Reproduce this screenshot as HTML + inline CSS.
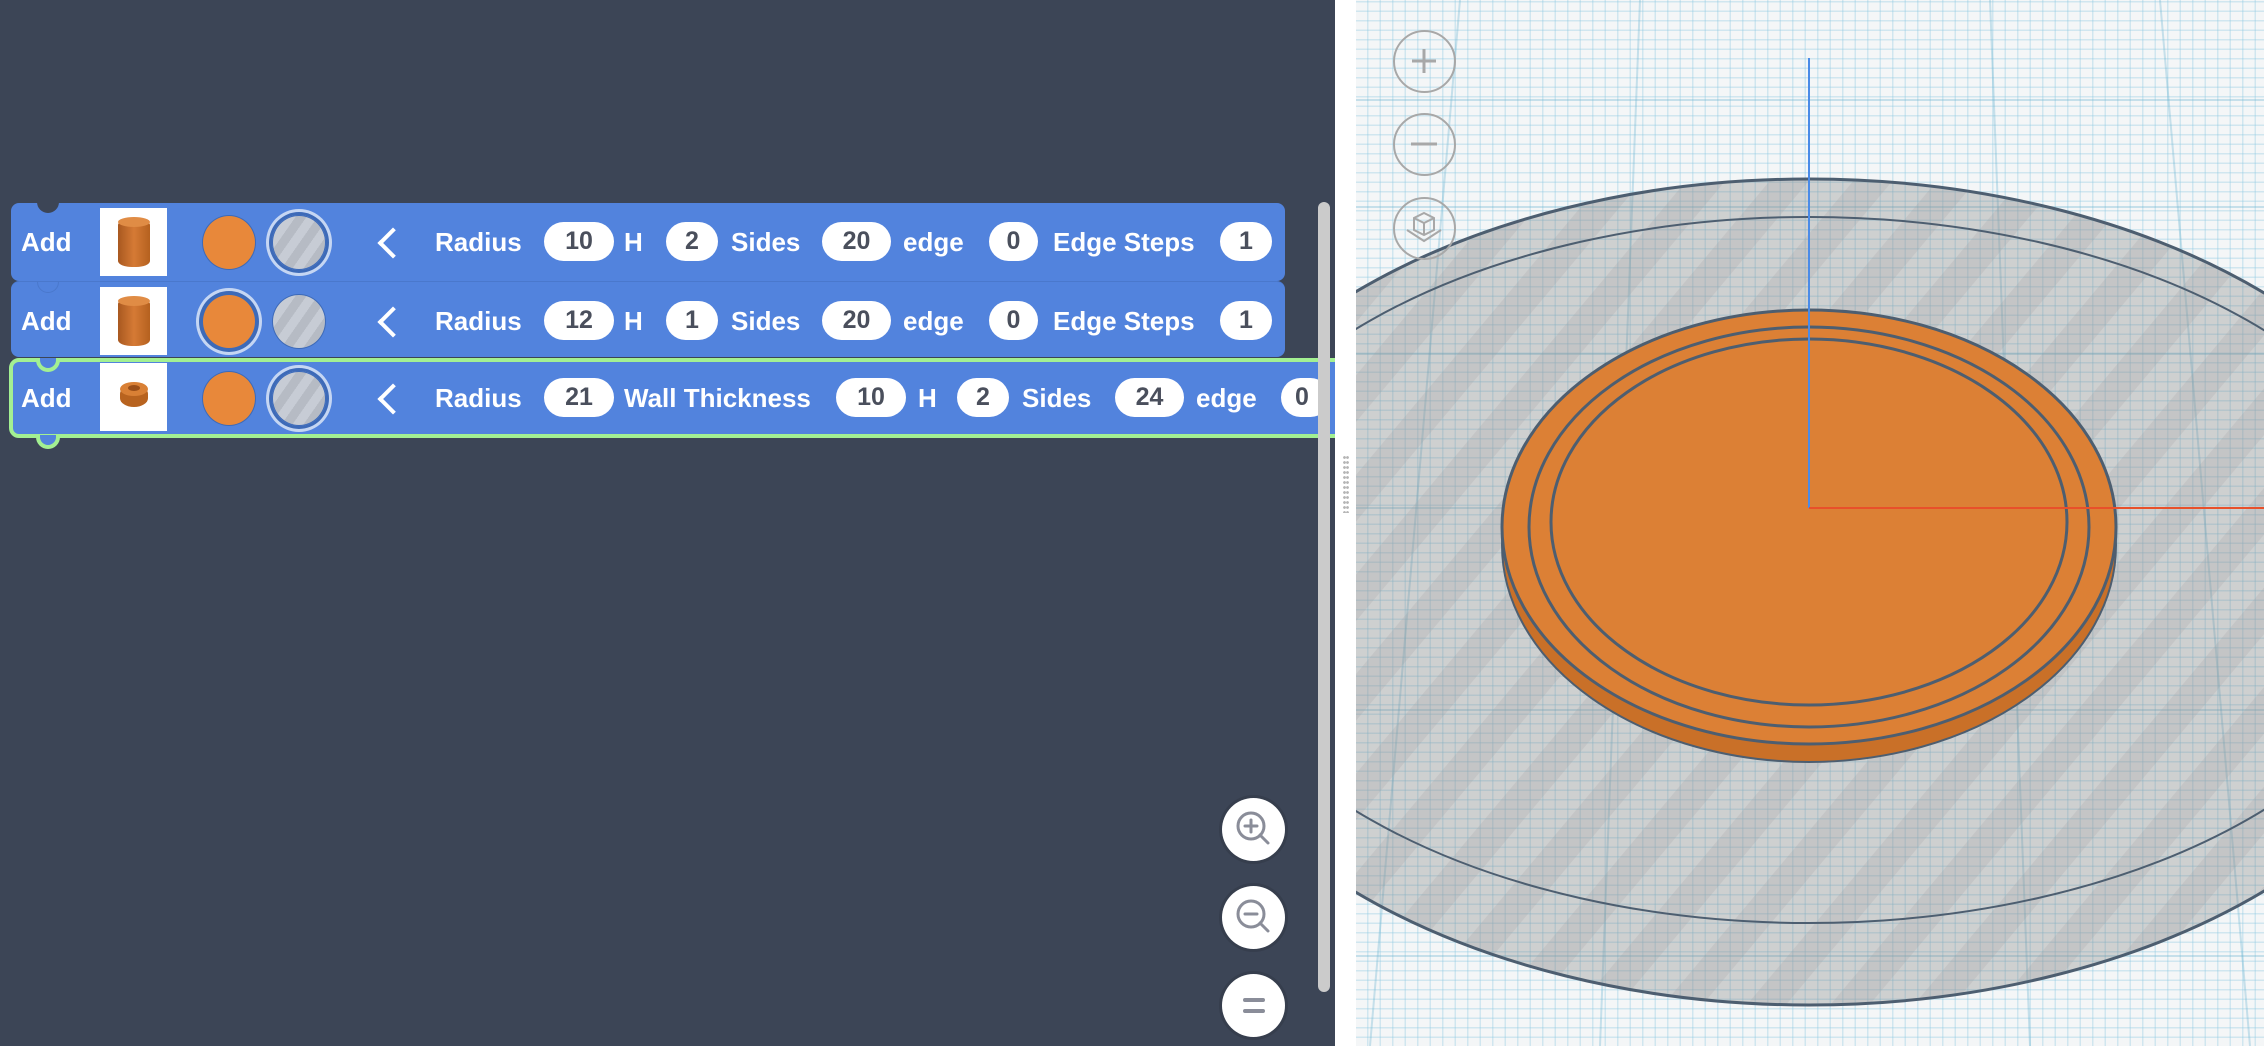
<!DOCTYPE html>
<html><head><meta charset="utf-8">
<style>
*{margin:0;padding:0;box-sizing:border-box}
body{width:2264px;height:1046px;overflow:hidden;background:#3c4556;font-family:"Liberation Sans",Arial,sans-serif;position:relative}
.blk{position:absolute;left:11px;background:#5283dd;border-radius:8px;color:#fff}
.t{position:absolute;font-size:26px;line-height:30px;white-space:nowrap;font-weight:bold}
.pill{position:absolute;background:#fff;border-radius:20px;height:39px;color:#4a4f5c;font-size:25px;line-height:39px;text-align:center;font-weight:bold}
.thumb{position:absolute;left:89px;width:67px;height:68px;background:#fff}
.c1{position:absolute;width:54px;height:55px;border-radius:50%;background:#e8883a;border:1px solid #3d6ab8}
.c2{position:absolute;width:54px;height:55px;border-radius:50%;border:1px solid #3d6ab8;background:repeating-linear-gradient(-55deg,#c7ccd5 0 9px,#b6bbc4 9px 18px)}
.sel{box-shadow:0 0 0 3px #3d6ab8,0 0 0 6px #c5d6f3}
.chev{position:absolute;width:22px;height:22px;border-left:4px solid #fff;border-bottom:4px solid #fff;transform:rotate(45deg)}
.zb{position:absolute;left:1222px;width:63px;height:63px;border-radius:50%;background:#fff;box-shadow:0 0 0 3px #363e4d}
.vb{position:absolute;left:1393px;width:63px;height:63px;border-radius:50%;border:2px solid #a8a8a8}
</style></head><body>

<div class="blk" style="top:203px;width:1274px;height:78px">
  <div style="position:absolute;left:26px;top:-8px;width:22px;height:18px;border-radius:0 0 11px 11px;background:#3c4556"></div>
  <div class="t" style="left:10px;top:24px">Add</div>
  <div class="thumb" style="top:5px"><div style="position:absolute;left:18px;top:11px;width:32px;height:48px;background:linear-gradient(90deg,#a85820,#d57a35,#b5611f);border-radius:14px/6px"></div><div style="position:absolute;left:18px;top:9px;width:32px;height:10px;border-radius:50%;background:#e08c45"></div></div>
  <div class="c1" style="left:191px;top:12px"></div>
  <div class="c2 sel" style="left:261px;top:12px"></div>
  <div class="chev" style="left:371px;top:29px"></div>
  <div class="t" style="left:424px;top:24px">Radius</div>
  <div class="pill" style="left:533px;top:19px;width:70px">10</div>
  <div class="t" style="left:613px;top:24px">H</div>
  <div class="pill" style="left:655px;top:19px;width:52px">2</div>
  <div class="t" style="left:720px;top:24px">Sides</div>
  <div class="pill" style="left:811px;top:19px;width:69px">20</div>
  <div class="t" style="left:892px;top:24px">edge</div>
  <div class="pill" style="left:978px;top:19px;width:49px">0</div>
  <div class="t" style="left:1042px;top:24px">Edge Steps</div>
  <div class="pill" style="left:1209px;top:19px;width:52px">1</div>
</div>
<div class="blk" style="top:281px;width:1274px;height:76px;border-top:1px solid #4a78cc">
  <div style="position:absolute;left:26px;top:-1px;width:22px;height:12px;border-radius:0 0 11px 11px;border:1px solid #4a78cc;border-top:none"></div>
  <div class="t" style="left:10px;top:24px">Add</div>
  <div class="thumb" style="top:5px"><div style="position:absolute;left:18px;top:11px;width:32px;height:48px;background:linear-gradient(90deg,#a85820,#d57a35,#b5611f);border-radius:14px/6px"></div><div style="position:absolute;left:18px;top:9px;width:32px;height:10px;border-radius:50%;background:#e08c45"></div></div>
  <div class="c1 sel" style="left:191px;top:12px"></div>
  <div class="c2" style="left:261px;top:12px"></div>
  <div class="chev" style="left:371px;top:29px"></div>
  <div class="t" style="left:424px;top:24px">Radius</div>
  <div class="pill" style="left:533px;top:19px;width:70px">12</div>
  <div class="t" style="left:613px;top:24px">H</div>
  <div class="pill" style="left:655px;top:19px;width:52px">1</div>
  <div class="t" style="left:720px;top:24px">Sides</div>
  <div class="pill" style="left:811px;top:19px;width:69px">20</div>
  <div class="t" style="left:892px;top:24px">edge</div>
  <div class="pill" style="left:978px;top:19px;width:49px">0</div>
  <div class="t" style="left:1042px;top:24px">Edge Steps</div>
  <div class="pill" style="left:1209px;top:19px;width:52px">1</div>
</div>
<div class="blk" style="top:358px;left:9px;width:1340px;height:80px;border:4px solid #a3f092;border-radius:10px">
  <div style="position:absolute;left:23px;top:-4px;width:24px;height:14px;border-radius:0 0 12px 12px;border:4px solid #a3f092;border-top:none;background:#5283dd"></div>
  <div style="position:absolute;left:23px;bottom:-15px;width:24px;height:14px;border-radius:0 0 12px 12px;border:4px solid #a3f092;border-top:none;background:#5283dd"></div>
  <div class="t" style="left:8px;top:21px">Add</div>
  <div class="thumb" style="top:1px;left:87px"><div style="position:absolute;left:20px;top:22px;width:28px;height:22px;background:#b8631f;border-radius:50%/40%"></div><div style="position:absolute;left:20px;top:19px;width:28px;height:14px;border-radius:50%;background:#d98035"></div><div style="position:absolute;left:28px;top:22px;width:12px;height:6px;border-radius:50%;background:#9a4e18"></div></div>
  <div class="c1" style="left:189px;top:9px"></div>
  <div class="c2 sel" style="left:259px;top:9px"></div>
  <div class="chev" style="left:369px;top:26px"></div>
  <div class="t" style="left:422px;top:21px">Radius</div>
  <div class="pill" style="left:531px;top:16px;width:70px">21</div>
  <div class="t" style="left:611px;top:21px">Wall Thickness</div>
  <div class="pill" style="left:823px;top:16px;width:70px">10</div>
  <div class="t" style="left:905px;top:21px">H</div>
  <div class="pill" style="left:944px;top:16px;width:52px">2</div>
  <div class="t" style="left:1009px;top:21px">Sides</div>
  <div class="pill" style="left:1102px;top:16px;width:69px">24</div>
  <div class="t" style="left:1183px;top:21px">edge</div>
  <div class="pill" style="left:1268px;top:16px;width:49px;text-align:left;padding-left:14px">0</div>
</div>

<div style="position:absolute;left:1318px;top:202px;width:12px;height:790px;background:#cbcbcb;border-radius:6px"></div>
<div class="zb" style="top:798px"><svg width="63" height="63" viewBox="0 0 63 63" fill="none" stroke="#8a8d99" stroke-width="3" stroke-linecap="round"><circle cx="29" cy="28" r="13"/><path d="M38 37l8 8M23 28h12M29 22v12"/></svg></div>
<div class="zb" style="top:886px"><svg width="63" height="63" viewBox="0 0 63 63" fill="none" stroke="#8a8d99" stroke-width="3" stroke-linecap="round"><circle cx="29" cy="28" r="13"/><path d="M38 37l8 8M23 28h12"/></svg></div>
<div class="zb" style="top:974px"><svg width="63" height="63" viewBox="0 0 63 63" fill="none" stroke="#8a8d99" stroke-width="4" stroke-linecap="round"><path d="M23 26h18M23 37h18"/></svg></div>

<div style="position:absolute;left:1335px;top:0;width:21px;height:1046px;background:#fff"></div>
<div style="position:absolute;left:1343px;top:455px;width:6px;height:58px;background:radial-gradient(circle,#b5b5b5 1.2px,transparent 1.6px) 0 0/3px 5px"></div>

<div style="position:absolute;left:1356px;top:0;width:908px;height:1046px;overflow:hidden;background:
repeating-linear-gradient(0deg,transparent 0 8px,rgba(140,200,225,.35) 8px 9.5px),
repeating-linear-gradient(90deg,transparent 0 11px,rgba(140,200,225,.35) 11px 12.5px),#f4f6f7">
<svg width="908" height="1046" viewBox="1356 0 908 1046" style="position:absolute;left:0;top:0">
<defs><pattern id="st" width="64" height="64" patternUnits="userSpaceOnUse" patternTransform="rotate(40)"><rect width="64" height="64" fill="rgba(120,120,120,.30)"/><rect width="30" height="64" fill="rgba(160,160,160,.22)"/></pattern></defs>
<g stroke="rgba(110,180,210,.35)" stroke-width="2">
<line x1="1356" y1="100" x2="2264" y2="100"/><line x1="1356" y1="207" x2="2264" y2="207"/><line x1="1356" y1="354" x2="2264" y2="354"/><line x1="1356" y1="508" x2="2264" y2="508"/><line x1="1356" y1="710" x2="2264" y2="710"/><line x1="1356" y1="956" x2="2264" y2="956"/>
<line x1="1460" y1="0" x2="1370" y2="1046"/><line x1="1640" y1="0" x2="1600" y2="1046"/><line x1="1990" y1="0" x2="2030" y2="1046"/><line x1="2160" y1="0" x2="2250" y2="1046"/>
</g>
<ellipse cx="1809" cy="592" rx="660" ry="413" fill="url(#st)" stroke="#4d5e70" stroke-width="3"/>
<ellipse cx="1809" cy="570" rx="620" ry="353" fill="none" stroke="#4d5e70" stroke-width="2"/>
<ellipse cx="1809" cy="545" rx="307" ry="217" fill="#c97028" stroke="#4d5e70" stroke-width="2"/>
<ellipse cx="1809" cy="527" rx="307" ry="217" fill="#dc8035" stroke="#4d5e70" stroke-width="3"/>
<ellipse cx="1809" cy="527" rx="280" ry="200" fill="none" stroke="#4d5e70" stroke-width="3"/>
<ellipse cx="1809" cy="522" rx="258" ry="183" fill="none" stroke="#4d5e70" stroke-width="3"/>
<line x1="1809" y1="58" x2="1809" y2="508" stroke="#4a8be8" stroke-width="2"/>
<line x1="1809" y1="508" x2="2264" y2="508" stroke="#e8502a" stroke-width="2"/>
</svg>
<div class="vb" style="top:30px;left:37px"><svg width="59" height="59" viewBox="0 0 59 59" stroke="#a8a8a8" stroke-width="3"><path d="M29 17v24M17 29h24"/></svg></div>
<div class="vb" style="top:113px;left:37px"><svg width="59" height="59" viewBox="0 0 59 59" stroke="#a8a8a8" stroke-width="3"><path d="M16 29h26"/></svg></div>
<div class="vb" style="top:197px;left:37px"><svg width="59" height="59" viewBox="0 0 59 59" fill="none" stroke="#a8a8a8" stroke-width="2"><path d="M29 14l10 5v12l-10 5-10-5V19zM19 19l10 5 10-5M29 24v12M12 31l17 11 17-11"/></svg></div>
</div>
</body></html>
